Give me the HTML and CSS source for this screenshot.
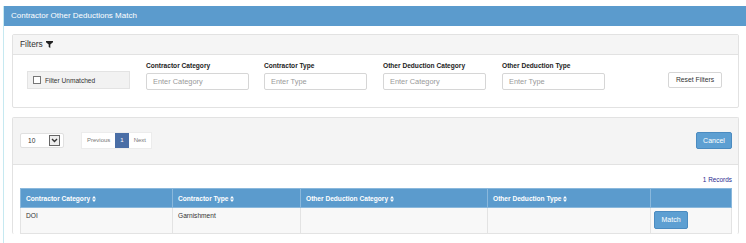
FILE: index.html
```html
<!DOCTYPE html>
<html>
<head>
    <title>Contractor Other Deductions Match</title>
    <meta http-equiv="Content-Type" content="text/html; charset=utf-8">
    <link rel="stylesheet" href="styles.css">
</head>
<body>

<div class="page">
    <div class="main-panel">
        <div class="main-heading">Contractor Other Deductions Match</div>

        <div class="main-body">

            <!-- Filtros -->
            <div class="box">
                <div class="box-heading">
                    Filters
                    <svg class="funnel" width="7" height="7" viewBox="0 0 7 7"><path d="M0 0H7V1.2L4.3 3.6V7L2.7 6V3.6L0 1.2Z" fill="#222"/></svg>
                </div>
                <div class="filters">
                    <label class="unmatched"><span class="check"></span>Filter Unmatched</label>

                    <div class="field">
                        <label>Contractor Category</label>
                        <div class="input">Enter Category</div>
                    </div>
                    <div class="field narrow">
                        <label>Contractor Type</label>
                        <div class="input">Enter Type</div>
                    </div>
                    <div class="field">
                        <label>Other Deduction Category</label>
                        <div class="input">Enter Category</div>
                    </div>
                    <div class="field">
                        <label>Other Deduction Type</label>
                        <div class="input">Enter Type</div>
                    </div>

                    <a href="#" class="btn-default">Reset Filters</a>
                </div>
            </div>

            <!-- Resultados -->
            <div class="box results">
                <div class="toolbar">
                    <div class="page-size">
                        <span>10</span>
                        <span class="arrow"><svg width="7" height="5" viewBox="0 0 7 5"><path d="M1 1L3.5 3.5L6 1" stroke="#333" stroke-width="1.4" fill="none"/></svg></span>
                    </div>
                    <div class="pager">
                        <a href="#">Previous</a>
                        <a href="#" class="active">1</a>
                        <a href="#">Next</a>
                    </div>
                    <a href="#" class="btn-primary cancel">Cancel</a>
                </div>

                <div class="results-body">
                    <p class="count">1 Records</p>
                    <table>
                        <thead>
                            <tr>
                                <th class="c1">Contractor Category <svg class="sort" width="4" height="6" viewBox="0 0 4 6"><path d="M0 2.4L2 0L4 2.4ZM0 3.6H4L2 6Z" fill="white"/></svg></th>
                                <th class="c2">Contractor Type <svg class="sort" width="4" height="6" viewBox="0 0 4 6"><path d="M0 2.4L2 0L4 2.4ZM0 3.6H4L2 6Z" fill="white"/></svg></th>
                                <th class="c3">Other Deduction Category <svg class="sort" width="4" height="6" viewBox="0 0 4 6"><path d="M0 2.4L2 0L4 2.4ZM0 3.6H4L2 6Z" fill="white"/></svg></th>
                                <th class="c4">Other Deduction Type <svg class="sort" width="4" height="6" viewBox="0 0 4 6"><path d="M0 2.4L2 0L4 2.4ZM0 3.6H4L2 6Z" fill="white"/></svg></th>
                                <th class="c5"></th>
                            </tr>
                        </thead>
                        <tbody>
                            <tr>
                                <td>DOI</td>
                                <td>Garnishment</td>
                                <td></td>
                                <td></td>
                                <td class="action"><a href="#" class="btn-primary">Match</a></td>
                            </tr>
                        </tbody>
                    </table>
                </div>
            </div>

        </div>
    </div>
</div>

</body>
</html>
```

FILE: styles.css
```css
body, html {
    margin: 0;
    padding: 0;
    background-color: white;
    font-family: 'Liberation Sans', Arial, sans-serif;
    color: #333;
    overflow: hidden;
}

a {
    text-decoration: none;
}

.page {
    padding: 6px 0 0 3px;
}

.main-panel {
    border-left: 1px solid #c6e9f1;
    height: 237px;
    overflow: hidden;
}

.main-heading {
    height: 20px;
    line-height: 20px;
    padding-left: 7px;
    background-color: #5b9bcd;
    color: white;
    font-size: 8px;
}

.main-body {
    padding: 8px 7px 0 8px;
}

.box {
    border: 1px solid #e2e2e2;
    border-radius: 2px;
}

.box-heading {
    height: 19px;
    line-height: 19px;
    padding-left: 7px;
    background-color: #f5f5f5;
    border-bottom: 1px solid #e2e2e2;
    font-size: 8.4px;
    color: #333;
}

.funnel {
    vertical-align: -1px;
    margin-left: 1px;
}

/* linha de filtros */
.filters {
    display: flex;
    align-items: flex-end;
    padding: 7px 16px 17px 14px;
}

.unmatched {
    display: flex;
    align-items: center;
    box-sizing: border-box;
    width: 103px;
    height: 18px;
    margin-bottom: 1px;
    padding-left: 5px;
    background-color: #f2f2f2;
    border: 1px solid #e3e3e3;
    font-size: 6.6px;
    color: #333;
}

.check {
    width: 6px;
    height: 6px;
    margin-right: 4px;
    border: 1px solid #777;
    background-color: white;
}

.field {
    margin-left: 16px;
    display: flex;
    flex-direction: column;
}

.field.narrow {
    margin-left: 15px;
}

.field label {
    font-size: 6.6px;
    font-weight: bold;
    color: #222;
    height: 8px;
    line-height: 8px;
    margin-bottom: 3px;
}

.input {
    box-sizing: border-box;
    width: 103px;
    height: 17px;
    line-height: 15px;
    padding-left: 6px;
    border: 1px solid #d6d6d6;
    border-radius: 2px;
    font-size: 7.4px;
    color: #999;
}

.btn-default {
    margin-left: auto;
    margin-bottom: 2px;
    box-sizing: border-box;
    width: 54px;
    height: 16px;
    line-height: 14px;
    text-align: center;
    border: 1px solid #d6d6d6;
    border-radius: 2px;
    background-color: white;
    font-size: 6.8px;
    color: #333;
}

/* resultados */
.results {
    margin-top: 9px;
    border-bottom: none;
}

.toolbar {
    display: flex;
    align-items: center;
    height: 47px;
    padding: 0 6px 2px 7px;
    box-sizing: border-box;
    background-color: #f4f4f4;
    border-bottom: 1px solid #e2e2e2;
}

.page-size {
    display: flex;
    align-items: center;
    justify-content: space-between;
    box-sizing: border-box;
    width: 44px;
    height: 15px;
    padding: 0 3px 0 7px;
    background-color: white;
    border: 1px solid #e0e0e0;
    border-radius: 2px;
    font-size: 6.6px;
    color: #333;
}

.page-size .arrow {
    display: flex;
    align-items: center;
    justify-content: center;
    width: 9px;
    height: 9px;
    border: 1px solid #666;
    background-color: #eee;
}

.pager {
    display: flex;
    margin-left: 17px;
    height: 15px;
    background-color: white;
    border: 1px solid #ececec;
}

.pager a {
    padding: 0 5px;
    line-height: 15px;
    font-size: 6px;
    color: #777;
}

.pager a.active {
    padding: 0 5px;
    background-color: #4a6ea6;
    color: white;
}

.btn-primary {
    display: inline-block;
    box-sizing: border-box;
    text-align: center;
    background-color: #5d9fd2;
    border: 1px solid #4b8bc0;
    border-radius: 2px;
    color: white;
    font-size: 7px;
}

.cancel {
    margin-left: auto;
    width: 36px;
    height: 17px;
    line-height: 15px;
}

.results-body {
    padding: 0 6px 0 7px;
}

.count {
    margin: 0;
    padding-top: 8px;
    height: 14px;
    line-height: 14px;
    text-align: right;
    font-size: 6.4px;
    color: #2b2b8f;
}

table {
    width: 712px;
    margin-top: 1px;
    border-collapse: collapse;
    table-layout: fixed;
}

th, td {
    box-sizing: border-box;
}

th {
    height: 19px;
    padding: 0 0 0 5px;
    background-color: #5b9bcd;
    border: 1px solid #8ab8dc;
    color: white;
    font-size: 6.6px;
    font-weight: bold;
    text-align: left;
    white-space: nowrap;
}

th.c1 { width: 152px; }
th.c2 { width: 128px; }
th.c3 { width: 187px; }
th.c4 { width: 163px; }

.sort {
    vertical-align: -1px;
}

td {
    height: 26px;
    padding: 4px 0 0 5px;
    vertical-align: top;
    background-color: #f8f8f8;
    border: 1px solid #e3e3e3;
    font-size: 6.6px;
    color: #333;
}

td.action {
    padding: 3px 0 0 3px;
}

td.action .btn-primary {
    width: 34px;
    height: 18px;
    line-height: 16px;
}
```
